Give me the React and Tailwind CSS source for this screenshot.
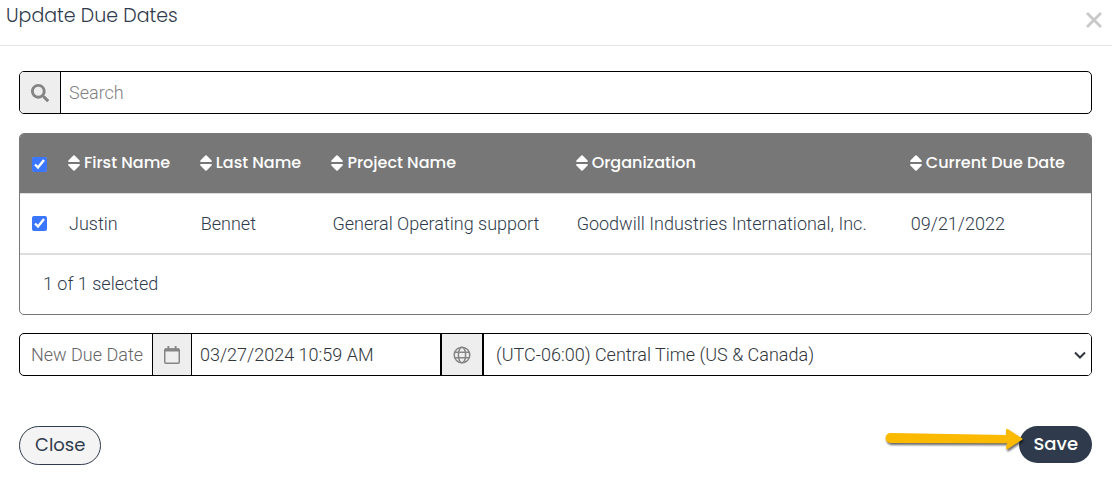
import { useState } from "react";
import { FaSearch } from "react-icons/fa";

const columns = ["First Name", "Last Name", "Project Name", "Organization", "Current Due Date"];

const rows = [
  ["Justin", "Bennet", "General Operating support", "Goodwill Industries International, Inc.", "09/21/2022"],
];

function CloseIcon() {
  return (
    <svg viewBox="0 0 16 16" className="size-4" fill="none" stroke="currentColor" strokeWidth="2.8" aria-hidden="true">
      <path d="M1 1l14 14M15 1l-14 14" />
    </svg>
  );
}

function SortIcon() {
  return (
    <svg viewBox="0 0 12 16" className="h-4 w-3 shrink-0" fill="currentColor" aria-hidden="true">
      <path d="M5.300 .5Q6 -.2 6.700 .5L11.600 5.600Q12.200 6.900 11 7H1Q-.2 6.900 .4 5.600Z" />
      <path d="M5.300 15.500Q6 16.200 6.700 15.500L11.600 10.400Q12.200 9.100 11 9H1Q-.2 9.100 .4 10.400Z" />
    </svg>
  );
}

function CalendarIcon() {
  return (
    <svg viewBox="0 0 16 18" className="h-[18px] w-4" aria-hidden="true">
      <rect x=".75" y="3" width="14.500" height="14.250" rx="1" fill="none" stroke="currentColor" strokeWidth="1.500" />
      <path d="M1 2.500h14v3H1zM3.500 0h1.800v3H3.500zM10.700 0h1.800v3h-1.800z" fill="currentColor" />
    </svg>
  );
}

function GlobeIcon() {
  return (
    <svg viewBox="0 0 18 18" className="size-[18px]" fill="none" stroke="currentColor" strokeWidth="1.5" aria-hidden="true">
      <circle cx="9" cy="9" r="7.8" />
      <ellipse cx="9" cy="9" rx="3.6" ry="7.8" />
      <path d="M1.7 6.2h14.6M1.7 11.8h14.6" />
    </svg>
  );
}

function ChevronIcon() {
  return (
    <svg
      viewBox="0 0 12 8"
      className="pointer-events-none absolute top-1/2 right-[5px] h-2 w-3 -translate-y-1/2"
      fill="none"
      stroke="currentColor"
      strokeWidth="2"
      aria-hidden="true"
    >
      <path d="M1 1.500l5 5 5-5" />
    </svg>
  );
}

function ArrowPointer() {
  return (
    <svg
      viewBox="0 0 140 26"
      className="pointer-events-none absolute -top-[1px] right-[68px] h-[26px] w-[140px] drop-shadow-[1px_2px_1px_rgba(0,0,0,0.6)]"
      aria-hidden="true"
    >
      <path
        d="M6.500 8 L122 10 L122 5 Q122 3 124 4.300 L138 13.300 Q139 14 138 14.700 L124 24 Q121.500 25 122 22.500 L123 18.300 L6.500 18 A5 5 0 0 1 6.500 8Z"
        fill="#fbb900"
      />
    </svg>
  );
}

export default function App() {
  const [selected, setSelected] = useState(rows.map(() => true));
  const [date, setDate] = useState("03/27/2024 10:59 AM");
  const count = selected.filter(Boolean).length;

  return (
    <div
      role="dialog"
      aria-labelledby="dialog-title"
      className="bg-white font-[Roboto,sans-serif] text-lg leading-6 font-light text-[#2f3b4c]"
    >
      <header className="flex h-[46px] items-start justify-between border-b border-[#e5e5e5] pt-1 pr-2.5 pl-1.5">
        <h1 id="dialog-title" className="font-[Poppins,Inter,sans-serif] text-[19px] leading-6 font-light">
          Update Due Dates
        </h1>
        <button type="button" aria-label="Close dialog" className="mt-2 text-[#c8c8c8]">
          <CloseIcon />
        </button>
      </header>

      <main className="px-5 pt-[25px] pl-[19px]">
        <div className="flex h-[43px] overflow-hidden rounded-[5px] border border-black">
          <label htmlFor="search" aria-label="Search" className="flex w-[41px] shrink-0 items-center justify-center border-r border-black bg-[#eee] text-[#858585]">
            <FaSearch className="size-[18px]" />
          </label>
          <input
            id="search"
            type="search"
            placeholder="Search"
            className="min-w-0 flex-1 px-2 outline-none placeholder:text-[#808080]"
          />
        </div>

        <section className="mt-[19px] overflow-hidden rounded-[5px] border border-[#777]">
          <table className="w-full table-fixed border-collapse text-left">
            <colgroup>
              <col className="w-[37px]" />
              <col className="w-[12.3%]" />
              <col className="w-[12.3%]" />
              <col className="w-[22.8%]" />
              <col className="w-[31.2%]" />
              <col />
            </colgroup>
            <thead className="bg-[#777] text-white">
              <tr className="h-[59px]">
                <th className="pl-3">
                  <input
                    type="checkbox"
                    aria-label="Select all"
                    checked={count === rows.length}
                    onChange={(e) => setSelected(rows.map(() => e.target.checked))}
                    className="mt-0.5 block size-[15px] accent-[#3b76ff]"
                  />
                </th>
                {columns.map((name) => (
                  <th key={name} className="pl-[11px] font-medium">
                    <button type="button" className="flex items-center gap-1 font-[Poppins,Inter,sans-serif] text-base leading-6 whitespace-nowrap">
                      <SortIcon />
                      {name}
                    </button>
                  </th>
                ))}
              </tr>
            </thead>
            <tbody>
              {rows.map((row, i) => (
                <tr key={row[0]} className="h-[61px] border-t border-b-2 border-[#ddd]">
                  <td className="pl-3">
                    <input
                      type="checkbox"
                      aria-label={`Select ${row[0]} ${row[1]}`}
                      checked={selected[i]}
                      onChange={(e) => setSelected(selected.map((s, j) => (j === i ? e.target.checked : s)))}
                      className="block size-[15px] accent-[#3b76ff]"
                    />
                  </td>
                  {row.map((cell) => (
                    <td key={cell} className="pt-0.5 pl-3 whitespace-nowrap">
                      {cell}
                    </td>
                  ))}
                </tr>
              ))}
            </tbody>
          </table>
          <p className="flex h-[59px] items-center px-[23px] pb-0.5">
            {count} of {rows.length} selected
          </p>
        </section>

        <div className="mt-[18px] flex h-[43px] overflow-hidden rounded-[5px] border border-black text-[#30363c]">
          <label htmlFor="due-date" className="flex w-[133px] shrink-0 items-center border-r border-black pl-[11px] whitespace-nowrap text-[#666]">
            New Due Date
          </label>
          <span className="flex w-[39px] shrink-0 items-center justify-center border-r border-black bg-[#eee] text-[#858585]">
            <CalendarIcon />
          </span>
          <input
            id="due-date"
            type="text"
            value={date}
            onChange={(e) => setDate(e.target.value)}
            className="w-[250px] min-w-0 border-r-2 border-black px-2 outline-none"
          />
          <label htmlFor="timezone" aria-label="Time zone" className="flex w-[42px] shrink-0 items-center justify-center border-r-2 border-black bg-[#eee] text-[#858585]">
            <GlobeIcon />
          </label>
          <div className="relative flex min-w-0 flex-1">
            <select id="timezone" className="min-w-0 flex-1 appearance-none bg-white pr-6 pl-3 outline-none">
              <option>(UTC-06:00) Central Time (US &amp; Canada)</option>
            </select>
            <ChevronIcon />
          </div>
        </div>
      </main>

      <footer className="flex items-start justify-between pt-[50px] pr-5 pb-5 pl-[19px] font-[Poppins,Inter,sans-serif]">
        <button type="button" className="h-[39px] rounded-full border border-[#2f3b4c] bg-[#f4f4f4] px-[15px] pb-0.5 font-normal">
          Close
        </button>
        <div className="relative">
          <button type="button" className="h-[37px] rounded-full bg-[#2f3b4c] px-3.5 pb-0.5 font-medium text-white">
            Save
          </button>
          <ArrowPointer />
        </div>
      </footer>
    </div>
  );
}
